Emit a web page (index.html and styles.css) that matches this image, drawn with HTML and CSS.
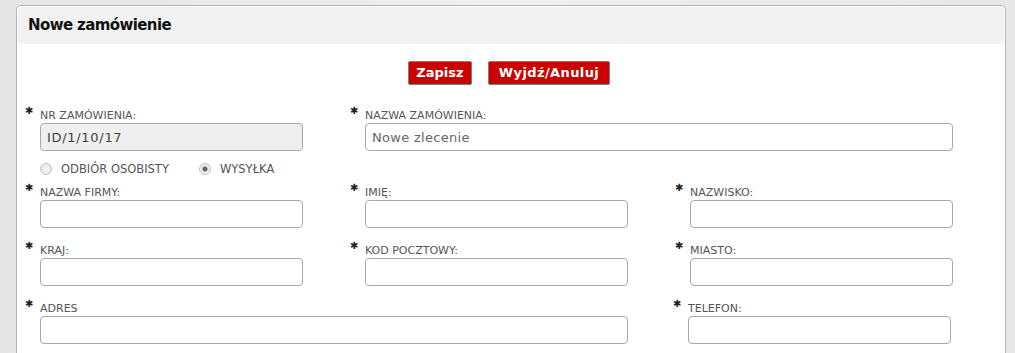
FILE: index.html
```html
<!DOCTYPE html>
<html>
<head>
    <meta charset="utf-8">
    <title>Nowe zamówienie</title>
    <link rel="stylesheet" href="styles.css">
</head>
<body>
    <!-- order panel -->
    <div class="panel">
        <div class="panel-head">Nowe zamówienie</div>

        <div class="actions">
            <a class="btn btn-save" href="#">Zapisz</a>
            <a class="btn btn-cancel" href="#">Wyjdź/Anuluj</a>
        </div>

        <div class="form-row">
            <div class="field">
                <span class="req">✱</span>
                <div class="field-body">
                    <label>NR ZAMÓWIENIA:</label>
                    <input class="inp inp-disabled" type="text" value="ID/1/10/17" disabled>
                </div>
            </div>
            <div class="field wide">
                <span class="req">✱</span>
                <div class="field-body">
                    <label>NAZWA ZAMÓWIENIA:</label>
                    <input class="inp" type="text" value="Nowe zlecenie">
                </div>
            </div>
        </div>

        <div class="delivery">
            <label class="radio"><input type="radio" name="delivery"> ODBIÓR OSOBISTY</label>
            <label class="radio"><input type="radio" name="delivery" checked> WYSYŁKA</label>
        </div>

        <div class="form-row">
            <div class="field">
                <span class="req">✱</span>
                <div class="field-body">
                    <label>NAZWA FIRMY:</label>
                    <input class="inp" type="text">
                </div>
            </div>
            <div class="field">
                <span class="req">✱</span>
                <div class="field-body">
                    <label>IMIĘ:</label>
                    <input class="inp" type="text">
                </div>
            </div>
            <div class="field">
                <span class="req">✱</span>
                <div class="field-body">
                    <label>NAZWISKO:</label>
                    <input class="inp" type="text">
                </div>
            </div>
        </div>

        <div class="form-row">
            <div class="field">
                <span class="req">✱</span>
                <div class="field-body">
                    <label>KRAJ:</label>
                    <input class="inp" type="text">
                </div>
            </div>
            <div class="field">
                <span class="req">✱</span>
                <div class="field-body">
                    <label>KOD POCZTOWY:</label>
                    <input class="inp" type="text">
                </div>
            </div>
            <div class="field">
                <span class="req">✱</span>
                <div class="field-body">
                    <label>MIASTO:</label>
                    <input class="inp" type="text">
                </div>
            </div>
        </div>

        <div class="form-row">
            <div class="field wide">
                <span class="req">✱</span>
                <div class="field-body">
                    <label>ADRES</label>
                    <input class="inp" type="text">
                </div>
            </div>
            <div class="field shift">
                <span class="req">✱</span>
                <div class="field-body">
                    <label>TELEFON:</label>
                    <input class="inp" type="text">
                </div>
            </div>
        </div>
    </div>
</body>
</html>
```

FILE: styles.css
```css
/* page */
body {
    margin: 0;
    background: linear-gradient(to right, #e6e6e6, #efefef 50%, #e8e8e8);
    font-family: "DejaVu Sans", Verdana, sans-serif;
    color: #333;
}

/* white panel with grey header */
.panel {
    margin: 5px 0 0 16px;
    width: 986px;
    height: 400px;
    padding: 1px;
    background: #fff;
    border: 1px solid #b4b4b4;
    border-radius: 5px;
}
.panel-head {
    height: 37px;
    line-height: 37px;
    padding-left: 10px;
    background: #f2f2f2;
    border-radius: 4px;
    font-size: 15px;
    font-weight: bold;
    letter-spacing: -0.6px;
    color: #111;
}

/* save / cancel buttons */
.actions {
    display: flex;
    justify-content: center;
    gap: 16px;
    margin: 17px 0 24px;
    padding-right: 4px;
}
.btn {
    display: block;
    height: 22px;
    line-height: 22px;
    background: #cc0000;
    border: 1px solid #7d7d7d;
    border-radius: 2px;
    color: #fff;
    font-size: 13px;
    font-weight: bold;
    text-align: center;
    text-decoration: none;
}
.btn-save {
    width: 62px;
}
.btn-cancel {
    width: 120px;
    letter-spacing: 0.4px;
}

/* form grid: three 325px columns */
.form-row {
    display: grid;
    grid-template-columns: repeat(3, 325px);
    padding-left: 7px;
    margin-bottom: 16px;
}
.field {
    display: flex;
}
.field.wide {
    grid-column: span 2;
}
.field.shift {
    margin-left: -2px;
}
.req {
    width: 15px;
    font-size: 10px;
    line-height: 10px;
    margin-top: -3px;
    color: #222;
}
.field-body label {
    display: block;
    height: 14px;
    line-height: 14px;
    font-size: 11px;
    color: #555;
}
.inp {
    box-sizing: border-box;
    display: block;
    width: 263px;
    height: 28px;
    margin: 0;
    padding: 0 6px;
    border: 1px solid #a9a9a9;
    border-radius: 4px;
    background: #fff;
    font-family: "DejaVu Sans", Verdana, sans-serif;
    font-size: 13px;
    letter-spacing: 0.3px;
    color: #666;
}
.field.wide .inp {
    width: 588px;
}
.inp-disabled {
    background: #efefef;
    color: #444;
    letter-spacing: 0.7px;
}

/* delivery radios */
.delivery {
    display: flex;
    gap: 30px;
    height: 35px;
    align-items: center;
    padding-left: 22px;
    margin-top: -16px;
}
.radio {
    display: flex;
    align-items: center;
    gap: 9px;
    font-size: 11.5px;
    color: #555;
}
.radio input {
    appearance: none;
    width: 12px;
    height: 12px;
    margin: 0;
    border: 1px solid #c4c4c4;
    border-radius: 50%;
    background: radial-gradient(circle, #f4f4f4, #e2e2e2);
}
.radio input:checked {
    background: radial-gradient(circle, #666 0, #666 2px, #ececec 3px);
}
```
